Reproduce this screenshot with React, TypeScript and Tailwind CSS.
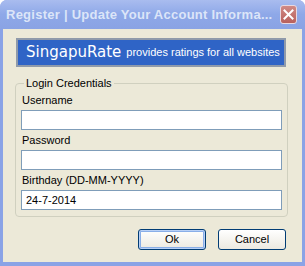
export default function App() {
  const font = { fontFamily: '"Liberation Sans", Arial, sans-serif' };

  return (
    <div className="w-[305px] h-[266px] bg-white">
      <div className="w-[305px] h-[266px] flex flex-col rounded-t-[7px] overflow-hidden bg-[#8aa3e6] text-[11px] text-black" style={font}>
        {/* title bar */}
        <div className="h-[29px] flex items-center pl-[6px] pr-[8px] bg-gradient-to-b from-[#a9bcef] via-[#8ea8e8] to-[#8aa3e4]">
          <span className="flex-1 text-[13px] font-bold tracking-[0.25px] text-[#dce5f8] whitespace-nowrap overflow-hidden">
            Register | Update Your Account Informa...
          </span>
          <div className="w-[17px] h-[19px] rounded-[3px] border border-[#e8d8e0] bg-gradient-to-b from-[#d08a86] to-[#b8605c] flex items-center justify-center">
            <svg width="11" height="11" viewBox="0 0 11 11">
              <path d="M1.5 1.5 L9.5 9.5 M9.5 1.5 L1.5 9.5" stroke="#fff" strokeWidth="2" strokeLinecap="square" />
            </svg>
          </div>
        </div>

        {/* client area */}
        <div className="flex-1 mx-[3px] mb-[4px] bg-[#ece9d8] flex flex-col pl-[12px] pr-[16px]">
          <div className="mt-[9px] ml-[1px] h-[29px] border-2 border-[#8f9aaa] bg-[#2f64c6] flex items-center pl-[8px] gap-[5px] text-white">
            <span className="text-[15px] leading-none" style={{ fontFamily: '"DejaVu Sans", sans-serif' }}>SingapuRate</span>
            <span className="text-[11px] leading-none">provides ratings for all websites</span>
          </div>

          <fieldset className="mt-[9px] w-[273px] border border-[#d0d0bf] rounded-[4px] px-[5px] pb-[6px]">
            <legend className="ml-[3px] px-[2px] leading-[14px] text-[#000]">Login Credentials</legend>
            {['Username', 'Password', 'Birthday (DD-MM-YYYY)'].map((label) => (
              <div key={label} className="flex flex-col">
                <div className="mt-[3px] mb-[3px] leading-[14px] pl-[1px]">{label}</div>
                <div className="h-[20px] border border-[#7f9db9] bg-white flex items-center px-[4px]">
                  {label.startsWith('Birthday') ? '24-7-2014' : ''}
                </div>
              </div>
            ))}
          </fieldset>

          <div className="mt-[12px] flex justify-end gap-[12px]">
            <button className="w-[68px] h-[21px] rounded-[3px] border border-[#003c74] bg-gradient-to-b from-[#ffffff] to-[#ece9e0] shadow-[inset_0_0_0_1px_#b8d0f6,inset_0_0_0_2px_#89aee8] text-[11px] leading-none">
              Ok
            </button>
            <button className="w-[68px] h-[21px] rounded-[3px] border border-[#003c74] bg-gradient-to-b from-[#ffffff] to-[#ece9e0] text-[11px] leading-none">
              Cancel
            </button>
          </div>
        </div>
      </div>
    </div>
  );
}
